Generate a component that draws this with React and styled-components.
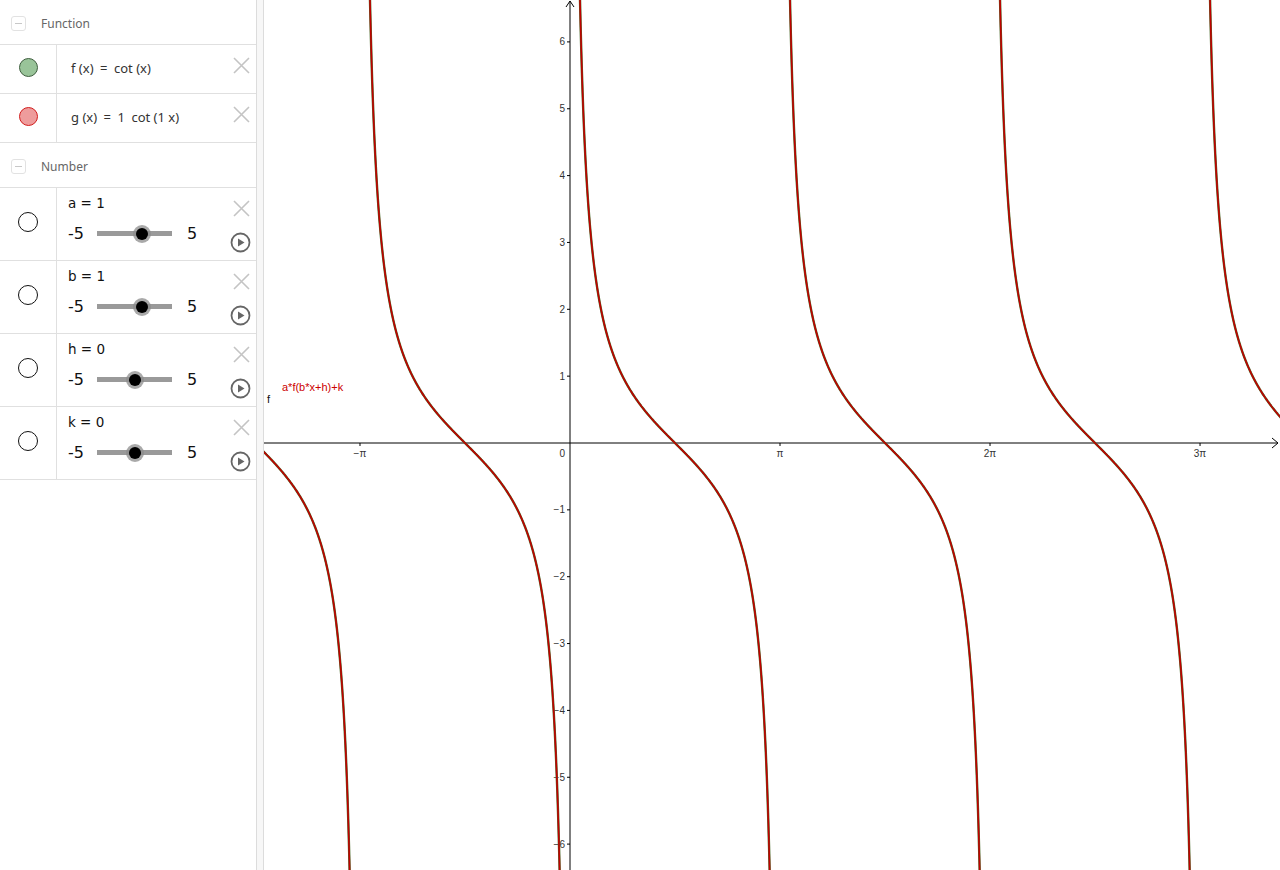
import React from "react";
import styled, { createGlobalStyle } from "styled-components";

const Global = createGlobalStyle`
  html, body { margin: 0; padding: 0; background: #fff; }
  body { font-family: "DejaVu Sans", "Noto Sans", sans-serif; overflow: hidden; }
`;

const Page = styled.div`
  display: flex;
  width: 1280px;
  height: 870px;
  overflow: hidden;
`;

const Panel = styled.div`
  width: 256px;
  flex: none;
  display: flex;
  flex-direction: column;
  background: #fff;
`;

const Divider = styled.div`
  width: 6px;
  flex: none;
  background: #f7f7f7;
  border-left: 1px solid #dcdcdc;
  border-right: 1px solid #dcdcdc;
`;

const GraphArea = styled.div`
  flex: 1;
  position: relative;
  overflow: hidden;
`;

const Header = styled.div`
  height: 45px;
  display: flex;
  align-items: center;
  border-bottom: 1px solid #e0e0e0;
  box-sizing: border-box;
  padding-left: 11px;
  padding-top: 2px;
  gap: 15px;
  font-family: "Noto Sans", "DejaVu Sans", sans-serif;
  font-size: 12px;
  color: #666;
`;

const Collapse = styled.span`
  width: 13px;
  height: 13px;
  border: 1px solid #e2e2e2;
  border-radius: 3px;
  position: relative;
  &::after {
    content: "";
    position: absolute;
    left: 3px;
    right: 3px;
    top: 6px;
    height: 1px;
    background: #c8c8c8;
  }
`;

const Row = styled.div`
  height: ${(p) => p.$h}px;
  display: flex;
  border-bottom: 1px solid #e0e0e0;
  box-sizing: border-box;
`;

const Marker = styled.div`
  width: 57px;
  flex: none;
  border-right: 1px solid #e0e0e0;
  display: flex;
  align-items: center;
  justify-content: center;
  padding-bottom: 4px;
  box-sizing: border-box;
`;

const Dot = styled.span`
  width: ${(p) => p.$size}px;
  height: ${(p) => p.$size}px;
  border-radius: 50%;
  box-sizing: border-box;
  background: ${(p) => p.$fill};
  border: 1px solid ${(p) => p.$stroke};
`;

const Body = styled.div`
  flex: 1;
  position: relative;
  display: flex;
  flex-direction: column;
  padding-left: 11px;
`;

const Expr = styled.div`
  font-family: "Noto Sans", "DejaVu Sans", sans-serif;
  font-size: 13px;
  color: #333;
  height: 100%;
  display: flex;
  align-items: center;
  padding-left: 3px;
  padding-bottom: 3px;
  box-sizing: border-box;
  white-space: pre;
`;

const Name = styled.div`
  font-size: 13.5px;
  color: #111;
  margin-top: 7px;
  height: 17px;
`;

const SliderLine = styled.div`
  display: flex;
  align-items: center;
  margin-top: 12px;
  font-size: 16px;
  color: #111;
`;

const Bound = styled.span`
  width: ${(p) => p.$w}px;
`;

const Track = styled.div`
  position: relative;
  width: 75px;
  height: 5px;
  background: #9a9a9a;
  margin-right: 15px;
`;

const Thumb = styled.span`
  position: absolute;
  top: 50%;
  width: 12px;
  height: 12px;
  border-radius: 50%;
  background: #000;
  transform: translate(-50%, -50%);
  box-shadow: 0 0 0 3px rgba(140, 140, 140, 0.75);
`;

const Del = styled.svg`
  position: absolute;
  right: 6px;
  top: ${(p) => p.$top}px;
`;

const Play = styled.svg`
  position: absolute;
  right: 5px;
  top: 44px;
`;

const DeleteIcon = ({ top }) => (
  <Del $top={top} width="17" height="17" viewBox="0 0 17 17">
    <path d="M1 1L16 16M16 1L1 16" stroke="#c4c4c4" strokeWidth="1.6" />
  </Del>
);

const PlayIcon = () => (
  <Play width="21" height="21" viewBox="0 0 21 21">
    <circle cx="10.5" cy="10.5" r="9" fill="none" stroke="#666" strokeWidth="1.8" />
    <path d="M8 6.5L14.5 10.5L8 14.5Z" fill="#666" />
  </Play>
);

const sliders = [
  { n: "a", v: 1 },
  { n: "b", v: 1 },
  { n: "h", v: 0 },
  { n: "k", v: 0 },
];

const S = 66.85;
const OX = 306;
const OY = 443;
const W = 1016;
const H = 870;

function cotPaths() {
  const out = [];
  for (let k = -2; k <= 4; k++) {
    const x0 = k * Math.PI + Math.atan(1 / 9);
    const x1 = (k + 1) * Math.PI - Math.atan(1 / 9);
    const pts = [];
    const n = 600;
    for (let i = 0; i <= n; i++) {
      const t = x0 + ((x1 - x0) * i) / n;
      const px = OX + t * S;
      if (px < -5 || px > W + 5) continue;
      const y = Math.cos(t) / Math.sin(t);
      pts.push(`${px.toFixed(2)},${(OY - y * S).toFixed(2)}`);
    }
    if (pts.length > 1) out.push("M" + pts.join("L"));
  }
  return out.join(" ");
}

const curve = cotPaths();

const xLabels = [
  { t: "−π", v: -1 },
  { t: "π", v: 1 },
  { t: "2π", v: 2 },
  { t: "3π", v: 3 },
];
const yVals = [6, 5, 4, 3, 2, 1, -1, -2, -3, -4, -5, -6];

const Graph = () => (
  <svg width={W} height={H} viewBox={`0 0 ${W} ${H}`} style={{ display: "block" }}>
    <g fontFamily="'Liberation Sans', Arial, sans-serif" fontSize="10" fill="#333">
      <line x1="0" y1={OY} x2={W - 2} y2={OY} stroke="#000" strokeWidth="1" />
      <path d={`M${W - 8} ${OY - 5}L${W - 2} ${OY}L${W - 8} ${OY + 5}`} fill="none" stroke="#000" strokeWidth="1" />
      <line x1={OX} y1="1" x2={OX} y2={H} stroke="#000" strokeWidth="1" />
      <path d={`M${OX - 4} 7L${OX} 1L${OX + 4} 7`} fill="none" stroke="#000" strokeWidth="1" />
      {xLabels.map((l) => {
        const px = OX + l.v * Math.PI * S;
        return (
          <g key={l.t}>
            <line x1={px} y1={OY} x2={px} y2={OY + 3} stroke="#000" />
            <text x={px} y={OY + 14} textAnchor="middle">{l.t}</text>
          </g>
        );
      })}
      <text x={OX - 5} y={OY + 14} textAnchor="end">0</text>
      {yVals.map((v) => {
        const py = OY - v * S;
        return (
          <g key={v}>
            <line x1={OX - 3} y1={py} x2={OX} y2={py} stroke="#000" />
            <text x={OX - 5} y={py + 3.5} textAnchor="end">{v < 0 ? "−" + -v : v}</text>
          </g>
        );
      })}
      <path d={curve} fill="none" stroke="#4a6a2a" strokeWidth="2.4" />
      <path d={curve} fill="none" stroke="#c00000" strokeWidth="1.6" />
      <text x="3" y="403" fontSize="11" fill="#111">f</text>
      <text x="18" y="391" fontSize="11" fill="#cc0000">a*f(b*x+h)+k</text>
    </g>
  </svg>
);

export default function App() {
  return (
    <Page>
      <Global />
      <Panel>
        <Header>
          <Collapse />
          Function
        </Header>
        <Row $h={49}>
          <Marker>
            <Dot $size={19} $fill="#99c499" $stroke="#3e5e3e" />
          </Marker>
          <Body>
            <Expr>{"f (x)\u2002=\u2002cot (x)"}</Expr>
            <DeleteIcon top={12} />
          </Body>
        </Row>
        <Row $h={49}>
          <Marker>
            <Dot $size={19} $fill="#ee9c9c" $stroke="#d21d1d" />
          </Marker>
          <Body>
            <Expr>{"g (x)\u2002=\u20021\u2002cot (1 x)"}</Expr>
            <DeleteIcon top={12} />
          </Body>
        </Row>
        <Header>
          <Collapse />
          Number
        </Header>
        {sliders.map((s) => (
          <Row $h={73} key={s.n}>
            <Marker>
              <Dot $size={20} $fill="#fff" $stroke="#111" />
            </Marker>
            <Body>
              <Name>{s.n} = {s.v}</Name>
              <SliderLine>
                <Bound $w={29}>-5</Bound>
                <Track>
                  <Thumb style={{ left: `${((s.v + 5) / 10) * 100}%` }} />
                </Track>
                <span>5</span>
              </SliderLine>
              <DeleteIcon top={12} />
              <PlayIcon />
            </Body>
          </Row>
        ))}
      </Panel>
      <Divider />
      <GraphArea>
        <Graph />
      </GraphArea>
    </Page>
  );
}
